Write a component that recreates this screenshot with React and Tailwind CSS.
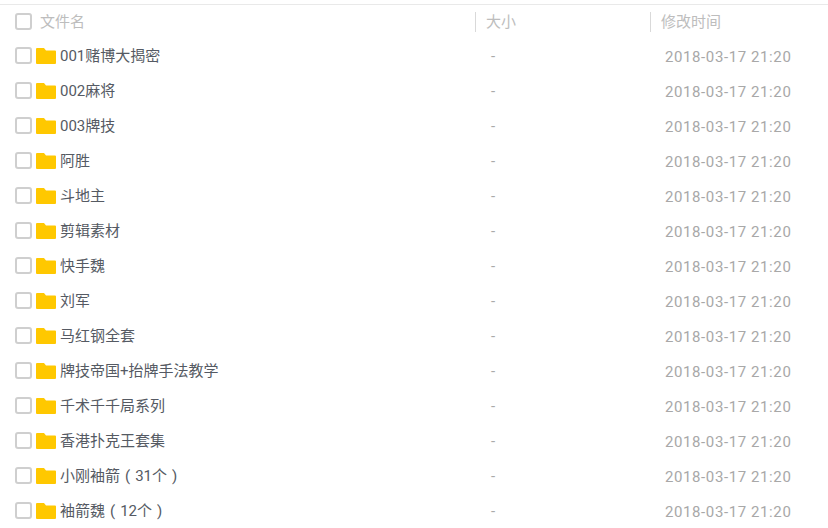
const files = [
  '001赌博大揭密',
  '002麻将',
  '003牌技',
  '阿胜',
  '斗地主',
  '剪辑素材',
  '快手魏',
  '刘军',
  '马红钢全套',
  '牌技帝国+抬牌手法教学',
  '千术千千局系列',
  '香港扑克王套集',
  '小刚袖箭(31个)',
  '袖箭魏(12个)',
];

function Checkbox() {
  return <div className="w-[17px] h-[17px] shrink-0 rounded-[3px] border-2 border-[#cfcfcf] bg-white" />;
}

function FolderIcon() {
  return (
    <svg width="20" height="16" viewBox="0 0 20 16" className="shrink-0">
      <path d="M1 0h7l2 2.5h9a1 1 0 0 1 1 1V15a1 1 0 0 1-1 1H1a1 1 0 0 1-1-1V1a1 1 0 0 1 1-1z" fill="#ffc800" />
    </svg>
  );
}

// 括號兩邊留空,佔滿一個全角格
function FileName({ name }) {
  return name.split(/([()])/).map((part, i) =>
    part === '(' || part === ')' ? (
      <span key={i} className="mx-[5px]">{part}</span>
    ) : (
      part
    )
  );
}

function FileRow({ name }) {
  return (
    <div className="flex items-center h-[35px]">
      <div className="w-[475px] flex items-center pl-[15px] shrink-0">
        <Checkbox />
        <div className="ml-1 flex items-center">
          <FolderIcon />
        </div>
        <span className="ml-[4px] pt-[2px] text-[15px] text-[#555a63]">
          <FileName name={name} />
        </span>
      </div>
      <div className="w-[190px] pl-[16px] pt-[2px] text-[15px] text-[#aaaaaa] shrink-0">-</div>
      <div className="text-[15px] tracking-[0.6px] text-[#a8a8a8] pt-[4px]">2018-03-17 21:20</div>
    </div>
  );
}

export default function App() {
  return (
    <div className="w-[828px] h-[528px] overflow-hidden bg-white font-['Roboto','Noto_Sans_CJK_SC',sans-serif]">
      <div className="mt-1 border-t border-[#e9e9e9]" />
      <div className="flex items-center h-[33px] text-[15px] text-[#bdbdbd]">
        <div className="w-[475px] flex items-center pl-[15px] shrink-0">
          <Checkbox />
          <span className="ml-2 pt-[2px]">文件名</span>
        </div>
        <div className="w-[175px] shrink-0 flex items-center">
          <div className="w-[1px] h-[20px] bg-[#d9d9d9]" />
          <span className="ml-[10px] pt-[2px]">大小</span>
        </div>
        <div className="flex items-center">
          <div className="w-[1px] h-[20px] bg-[#d9d9d9]" />
          <span className="ml-[10px] pt-[2px]">修改时间</span>
        </div>
      </div>
      {files.map((name) => (
        <FileRow key={name} name={name} />
      ))}
    </div>
  );
}
